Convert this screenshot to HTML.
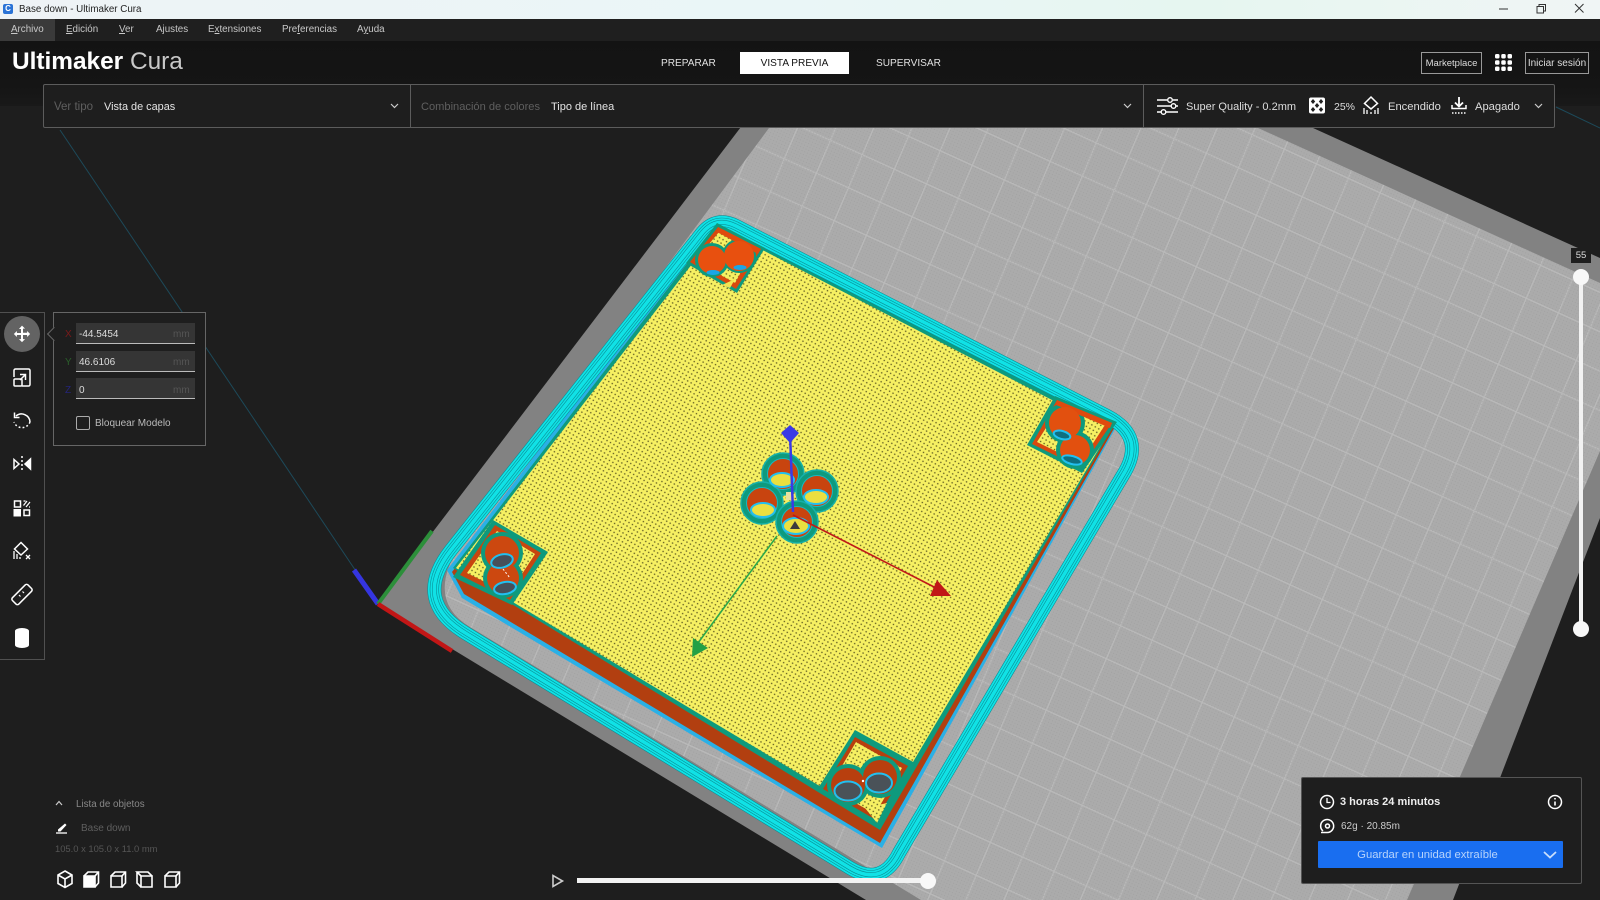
<!DOCTYPE html>
<html><head><meta charset="utf-8"><title>Base down - Ultimaker Cura</title>
<style>
html,body{margin:0;padding:0;width:1600px;height:900px;overflow:hidden;background:#1e1e1e;font-family:"Liberation Sans",sans-serif}
.a{position:absolute}
.t{position:absolute;white-space:nowrap;line-height:16px;height:16px}
svg{position:absolute;left:0;top:0}
u{text-decoration:underline}
</style></head><body>
<svg width="1600" height="900" viewBox="0 0 1600 900" style="z-index:0">
<defs>
<pattern id="grid" width="100" height="100" patternUnits="userSpaceOnUse" patternTransform="matrix(.32 .145 -.14 .33 10 4)">
<rect width="100" height="100" fill="#ababab"/>
<rect width="100" height="3.500" fill="#bababa"/><rect width="3.500" height="100" fill="#bababa"/>
</pattern>
<pattern id="fine" width="3" height="3" patternUnits="userSpaceOnUse" patternTransform="rotate(25)">
<rect x="1" y="1" width="1" height="1" fill="#9a9a9a" fill-opacity=".5"/>
</pattern>
<pattern id="yel" width="4" height="4" patternUnits="userSpaceOnUse" patternTransform="rotate(30)">
<rect width="4" height="4" fill="#f6f062"/><circle cx="2" cy="2" r=".8" fill="#5e5a20"/>
</pattern>
<path id="brim" d="M736 226L1107 416Q1147 437 1123 475L899 853Q882 887 850 868L467 634Q411 601 451 550L702 233Q716 216 736 226Z"/>
</defs>
<polygon points="887,-65 1600,258 1600,518 1453,900 866,900 378,604" fill="#828282"/>
<path d="M892 -38L1600 283L1600 451L1407 900L921 900L470 627Q425 600 460 545Z" fill="url(#grid)"/>
<path d="M892 -38L1600 283L1600 451L1407 900L921 900L470 627Q425 600 460 545Z" fill="url(#fine)"/>
<line x1="60" y1="130" x2="378" y2="604" stroke="#1d4a5a" stroke-width="1"/>
<line x1="1556" y1="107" x2="1600" y2="128" stroke="#1d4a5a" stroke-width="1"/>
<line x1="354" y1="570" x2="378" y2="604" stroke="#3535e0" stroke-width="5"/>
<line x1="378" y1="604" x2="432" y2="531" stroke="#2c8f3a" stroke-width="4"/>
<line x1="378" y1="604" x2="452" y2="651" stroke="#c21616" stroke-width="4.500"/>

<polygon points="717,218 1120,420 882,848 462,598 447,570" fill="#2ab0e6"/>
<polygon points="722,230 1117,423 880,843 464,594 452,572" fill="#b23f10"/>
<polygon points="719,222 1114,425 880,830 453,568" fill="#0e9a7d"/>
<polygon points="720,228 1110,430 878,821 456,568" fill="url(#yel)"/>

<g fill="none" stroke-linejoin="round">
<use href="#brim" stroke="#0a8f96" stroke-width="14"/>
<use href="#brim" stroke="#10e2e6" stroke-width="12.800"/>
<use href="#brim" stroke="#0a8f96" stroke-width="9.200"/>
<use href="#brim" stroke="#10e2e6" stroke-width="8"/>
<use href="#brim" stroke="#0a8f96" stroke-width="4.800"/>
<use href="#brim" stroke="#10e2e6" stroke-width="3.600"/>
</g>

<!-- top box -->
<polygon points="717,223 765,248 737,293 686,263" fill="#0e9a7d"/>
<polygon points="718,227 761,249 736,289 690,262" fill="#d8480e"/>
<polygon points="719,232 753,250 735,283 695,261" fill="url(#yel)"/>
<circle cx="712" cy="260" r="17" fill="#0e9a7d"/><circle cx="739" cy="256" r="17" fill="#0e9a7d"/>
<polygon points="718,227 761,249 758,254 717,232" fill="#e04a0e"/>
<circle cx="712" cy="260" r="14" fill="#e8500f"/><circle cx="739" cy="256" r="15" fill="#e8500f"/>
<ellipse cx="713" cy="272.500" rx="6.500" ry="2.500" fill="#1aa6e6"/><ellipse cx="740" cy="267.500" rx="6.500" ry="2.500" fill="#1aa6e6"/>
<polygon points="722,285 735,279 730,288" fill="#f2e552"/>

<!-- right box -->
<polygon points="1055,396 1117,422 1082,473 1027,445" fill="#0e9a7d"/>
<polygon points="1057,400 1112,423 1081,468 1032,444" fill="#d8480e"/>
<polygon points="1060,406 1105,425 1080,463 1037,442" fill="url(#yel)"/>
<circle cx="1065" cy="423" r="20" fill="#0e9a7d"/><circle cx="1075" cy="450" r="19" fill="#0e9a7d"/>
<polygon points="1057,400 1112,423 1110,428 1056,405" fill="#e04a0e"/>
<circle cx="1065" cy="423" r="16" fill="#e2500f"/><circle cx="1075" cy="450" r="15" fill="#e2500f"/>
<ellipse cx="1062" cy="435" rx="8.500" ry="4" fill="#0e6f80" stroke="#22c0f0" stroke-width="2" transform="rotate(15 1062 435)"/>
<ellipse cx="1072" cy="460" rx="10" ry="4" fill="#0e6f80" stroke="#22c0f0" stroke-width="2" transform="rotate(15 1072 460)"/>

<!-- left box -->
<polygon points="493,520 548,552 512,605 453,577" fill="#0e9a7d"/>
<polygon points="495,525 541,553 510,600 460,575" fill="#c7460f"/>
<polygon points="497,531 535,554 509,594 467,573" fill="url(#yel)"/>
<circle cx="502" cy="553" r="21" fill="#0e9a7d"/><circle cx="503" cy="578" r="20" fill="#0e9a7d"/>
<circle cx="502" cy="553" r="17" fill="#cc4810"/><circle cx="503" cy="578" r="16" fill="#cc4810"/>
<ellipse cx="502" cy="561" rx="11" ry="6.500" fill="#46505a" stroke="#22c0f0" stroke-width="2" transform="rotate(-15 502 561)"/>
<ellipse cx="505" cy="588" rx="11" ry="6" fill="#46505a" stroke="#22c0f0" stroke-width="2" transform="rotate(-10 505 588)"/>
<line x1="503" y1="569" x2="510" y2="578" stroke="#fff" stroke-width="1" stroke-dasharray="2 2"/>

<!-- bottom box -->
<polygon points="855,730 915,763 878,828 817,790" fill="#0e9a7d"/>
<polygon points="855,737 908,766 876,820 823,789" fill="#b83f0e"/>
<polygon points="856,742 902,768 875,814 829,788" fill="url(#yel)"/>
<circle cx="848" cy="785" r="21" fill="#0e9a7d"/><circle cx="880" cy="777" r="21" fill="#0e9a7d"/>
<polygon points="865,808 887,803 877,823" fill="url(#yel)"/>
<circle cx="848" cy="785" r="17" fill="#b83f0e"/><circle cx="880" cy="777" r="17" fill="#b83f0e"/>
<ellipse cx="848" cy="791" rx="13.500" ry="9.500" fill="#4a5258" stroke="#22c0f0" stroke-width="2"/>
<ellipse cx="879" cy="783" rx="13" ry="9.500" fill="#4a5258" stroke="#22c0f0" stroke-width="2"/>
<circle cx="863" cy="781" r="1.200" fill="#fff"/>

<!-- centre cluster -->
<g fill="#0e9a7d" stroke="#16b0a8" stroke-width="1.500">
<circle cx="783" cy="474" r="21"/><circle cx="817" cy="491" r="21"/><circle cx="762" cy="503" r="21"/><circle cx="797" cy="522" r="21"/>
</g>
<g fill="#c8440f" stroke="#18b8c0" stroke-width="1">
<circle cx="783" cy="474" r="15.500"/><circle cx="817" cy="491" r="15.500"/><circle cx="762" cy="503" r="15.500"/><circle cx="797" cy="522" r="15.500"/>
</g>
<g fill="#eadf40" stroke="#22c0f0" stroke-width="2">
<ellipse cx="782" cy="480" rx="12" ry="7"/><ellipse cx="816" cy="497" rx="12" ry="7"/><ellipse cx="763" cy="510" rx="12" ry="7"/><ellipse cx="796" cy="526" rx="13" ry="8"/>
</g>
<polygon points="795,521 800,529 790,529" fill="#3c3c3c"/>
<rect x="786" y="492" width="7" height="8" fill="#e8e0a0"/>

<!-- gizmo -->
<line x1="790" y1="433" x2="793" y2="512" stroke="#3a3ae6" stroke-width="2.500"/>
<polygon points="790,425 799,433 790,443 781,433" fill="#3a3ae6"/>
<line x1="793" y1="515" x2="938" y2="589" stroke="#c01818" stroke-width="1.600"/>
<polygon points="951,596 930,596 937,580" fill="#c01818"/>
<line x1="777" y1="536" x2="698" y2="643" stroke="#2aa84a" stroke-width="1.600"/>
<polygon points="692,657 693,638 708,648" fill="#23a045"/>
</svg>

<!-- chrome -->
<div class="a" style="left:0;top:0;width:1600px;height:19px;background:linear-gradient(90deg,#eef3f6,#eaf6f7 50%,#e6f6f0 75%,#f0f5f5);z-index:1"></div>
<div class="a" style="left:3px;top:4px;width:10px;height:10px;background:#2a73d6;border-radius:2px;z-index:2;color:#fff;font:bold 8px/10px 'Liberation Sans',sans-serif;text-align:center">C</div>
<div class="t" style="left:19px;top:2px;font-size:9.800px;color:#222;z-index:2">Base down - Ultimaker Cura</div>
<div class="a" style="left:0;top:19px;width:1600px;height:22px;background:#1f1f1f;z-index:1"></div>
<div class="a" style="left:0;top:19px;width:55px;height:22px;background:#3a3a3a;z-index:1"></div>
<div class="a" style="left:0;top:41px;width:1600px;height:65px;background:linear-gradient(#131313,#151515 70%,#191919);z-index:1"></div>

<div style="position:absolute;z-index:3;left:0;top:0;width:1600px;height:900px;color:#c8c8c8;font-size:9.800px">
<div class="t" style="left:11px;top:22px"><u>A</u>rchivo</div>
<div class="t" style="left:66px;top:22px"><u>E</u>dición</div>
<div class="t" style="left:119px;top:22px"><u>V</u>er</div>
<div class="t" style="left:156px;top:22px">A<u>j</u>ustes</div>
<div class="t" style="left:208px;top:22px">E<u>x</u>tensiones</div>
<div class="t" style="left:282px;top:22px">Pre<u>f</u>erencias</div>
<div class="t" style="left:357px;top:22px">A<u>y</u>uda</div>

<div class="a" style="left:12px;top:44px;font-size:24.400px;line-height:36px;font-weight:bold;color:#fff;white-space:nowrap">Ultimaker <span style="font-weight:normal;color:#c8c8c8">Cura</span></div>

<div class="t" style="left:661px;top:55.500px;font-size:10.100px;color:#e0e0e0">PREPARAR</div>
<div class="a" style="left:740px;top:52px;width:109px;height:22px;background:#fff;color:#111;font-size:10.100px;line-height:23px;text-align:center">VISTA PREVIA</div>
<div class="t" style="left:876px;top:55.500px;font-size:10.100px;color:#e0e0e0">SUPERVISAR</div>

<div class="a" style="left:1421px;top:52px;width:59px;height:20px;border:1px solid #999;color:#ddd;font-size:9.500px;line-height:21px;text-align:center">Marketplace</div>
<div class="a" style="left:1525px;top:52px;width:62px;height:20px;border:1px solid #999;color:#ddd;font-size:10px;line-height:21px;text-align:center">Iniciar sesión</div>

<!-- top bar -->
<div class="a" style="left:43px;top:84px;width:1510px;height:42px;background:#1e1e1e;border:1px solid #5c5c5c;border-radius:2px"></div>
<div class="a" style="left:410px;top:85px;width:1px;height:42px;background:#5c5c5c"></div>
<div class="a" style="left:1143px;top:85px;width:1px;height:42px;background:#5c5c5c"></div>
<div class="t" style="left:54px;top:98.500px;font-size:11.500px;color:#5f5f5f">Ver tipo</div>
<div class="t" style="left:104px;top:98.500px;font-size:10.900px;color:#e4e4e4">Vista de capas</div>
<div class="t" style="left:421px;top:98.500px;font-size:11.100px;color:#5f5f5f">Combinación de colores</div>
<div class="t" style="left:551px;top:98.500px;font-size:11px;color:#e4e4e4">Tipo de línea</div>
<div class="t" style="left:1186px;top:98.500px;font-size:11px;color:#ddd">Super Quality - 0.2mm</div>
<div class="t" style="left:1334px;top:98.500px;font-size:10.500px;color:#ddd">25%</div>
<div class="t" style="left:1388px;top:98.500px;font-size:11.200px;color:#ddd">Encendido</div>
<div class="t" style="left:1475px;top:98.500px;font-size:11.200px;color:#ddd">Apagado</div>

<!-- tool panel -->
<div class="a" style="left:-1px;top:312px;width:44px;height:346px;background:#1e1e1e;border:1px solid #505050"></div>
<div class="a" style="left:4px;top:316px;width:36px;height:36px;border-radius:50%;background:#636363"></div>
<div class="a" style="left:53px;top:312px;width:151px;height:132px;background:#1e1e1e;border:1px solid #666"></div>
<div class="a" style="left:49px;top:329px;width:9px;height:9px;background:#1e1e1e;border-left:1px solid #666;border-bottom:1px solid #666;transform:rotate(45deg)"></div>
<div class="a" style="left:76px;top:323px;width:119px;height:20px;background:#353535;border-bottom:1px solid #bbb"></div>
<div class="a" style="left:76px;top:351px;width:119px;height:20px;background:#353535;border-bottom:1px solid #bbb"></div>
<div class="a" style="left:76px;top:378px;width:119px;height:20px;background:#353535;border-bottom:1px solid #bbb"></div>
<div class="t" style="left:65px;top:327px;font-size:10px;color:#7a1a1a">X</div>
<div class="t" style="left:65px;top:354.500px;font-size:10px;color:#2a5f2a">Y</div>
<div class="t" style="left:65px;top:382.500px;font-size:10px;color:#25257a">Z</div>
<div class="t" style="left:79px;top:327px;font-size:10px;color:#ddd">-44.5454</div>
<div class="t" style="left:79px;top:354.500px;font-size:10px;color:#ddd">46.6106</div>
<div class="t" style="left:79px;top:382.500px;font-size:10px;color:#ddd">0</div>
<div class="t" style="left:173px;top:327px;font-size:10px;color:#555">mm</div>
<div class="t" style="left:173px;top:354.500px;font-size:10px;color:#555">mm</div>
<div class="t" style="left:173px;top:382.500px;font-size:10px;color:#555">mm</div>
<div class="a" style="left:76px;top:416px;width:12px;height:12px;border:1px solid #aaa;border-radius:2px"></div>
<div class="t" style="left:95px;top:416px;font-size:10px;color:#bbb">Bloquear Modelo</div>

<!-- object list -->
<div class="t" style="left:76px;top:797px;font-size:9.800px;color:#888">Lista de objetos</div>
<div class="t" style="left:81px;top:821px;font-size:10px;color:#5f5f5f">Base down</div>
<div class="t" style="left:55px;top:841px;font-size:9.400px;color:#555">105.0 x 105.0 x 11.0 mm</div>

<!-- print panel -->
<div class="a" style="left:1301px;top:777px;width:279px;height:105px;background:#1e1e1e;border:1px solid #555;border-radius:2px"></div>
<div class="t" style="left:1340px;top:794px;font-size:11px;font-weight:bold;color:#eee">3 horas 24 minutos</div>
<div class="t" style="left:1341px;top:819px;font-size:10px;color:#ccc">62g · 20.85m</div>
<div class="a" style="left:1318px;top:841px;width:245px;height:27px;background:#196ef0;border-radius:1px"></div>
<div class="a" style="left:1318px;top:842px;width:219px;height:27px;line-height:27px;text-align:center;font-size:11.300px;color:#b8d4fb">Guardar en unidad extraíble</div>

<!-- sliders -->
<div class="a" style="left:1571px;top:248px;width:20px;height:15px;background:#1e1e1e;color:#ddd;font-size:9.500px;line-height:16px;text-align:center">55</div>
<div class="a" style="left:1578.500px;top:277px;width:4.500px;height:352px;background:#f2f2f2"></div>
<div class="a" style="left:1573px;top:269px;width:16px;height:16px;border-radius:50%;background:#f8f8f8"></div>
<div class="a" style="left:1573px;top:621px;width:16px;height:16px;border-radius:50%;background:#f8f8f8"></div>
<div class="a" style="left:577px;top:878px;width:350px;height:5px;background:#f2f2f2"></div>
<div class="a" style="left:920px;top:873px;width:16px;height:16px;border-radius:50%;background:#f8f8f8"></div>
</div>

<!-- icons -->
<svg width="1600" height="900" viewBox="0 0 1600 900" style="z-index:4" fill="none" stroke="#fff" stroke-width="1.500">
<!-- window controls -->
<g stroke="#333" stroke-width="1"><path d="M1499 9h9"/><rect x="1537" y="6.500" width="6.500" height="6.500"/><path d="M1539 6.500V4.500h6.500v6.500h-2"/><path d="M1575 4l8.500 8.500M1583.500 4l-8.500 8.500"/></g>
<!-- chevrons -->
<g stroke="#ccc" stroke-width="1.200"><path d="M391 104l3.500 3.500 3.500-3.500"/><path d="M1124 104l3.500 3.500 3.500-3.500"/><path d="M1535 104l3.500 3.500 3.500-3.500"/></g>
<!-- grid icon -->
<g fill="#fff" stroke="none"><rect x="1495" y="54" width="4.500" height="4.500" rx="1.500"/><rect x="1501.250" y="54" width="4.500" height="4.500" rx="1.500"/><rect x="1507.500" y="54" width="4.500" height="4.500" rx="1.500"/><rect x="1495" y="60.250" width="4.500" height="4.500" rx="1.500"/><rect x="1501.250" y="60.250" width="4.500" height="4.500" rx="1.500"/><rect x="1507.500" y="60.250" width="4.500" height="4.500" rx="1.500"/><rect x="1495" y="66.500" width="4.500" height="4.500" rx="1.500"/><rect x="1501.250" y="66.500" width="4.500" height="4.500" rx="1.500"/><rect x="1507.500" y="66.500" width="4.500" height="4.500" rx="1.500"/></g>
<!-- settings icons -->
<g stroke-width="1.400"><path d="M1157 100h10M1173 100h5M1157 106h14M1176 106h2M1157 112h4M1166 112h12"/><circle cx="1170" cy="100" r="2.300"/><circle cx="1173.500" cy="106" r="2.300"/><circle cx="1163.500" cy="112" r="2.300"/></g>
<rect x="1309" y="97.500" width="16" height="16" rx="2" fill="#fff" stroke="none"/>
<g fill="#222" stroke="none"><path d="M1313 99l2.200 2.500-2.200 2.500-2.200-2.500zM1321 99l2.200 2.500-2.200 2.500-2.200-2.500zM1317 103l2.200 2.500-2.200 2.500-2.200-2.500zM1313 107l2.200 2.500-2.200 2.500-2.200-2.500zM1321 107l2.200 2.500-2.200 2.500-2.200-2.500z"/></g>
<path d="M1371 97l6.500 6.500-6.500 5.500-6.500-5.500z"/>
<path d="M1364 108v6M1367 110v4M1371 112v2M1375 110v4M1378 108v6" stroke-width="1.300"/>
<path d="M1459 97v9M1455 102.500l4 4 4-4" stroke-width="1.800"/>
<path d="M1452 105v3.500h14V105" stroke-width="1.500"/>
<path d="M1452 113h14" stroke-width="1.500" stroke-dasharray="1.500 1.500"/>
<!-- tools -->
<path transform="translate(22 334) scale(.76) translate(-22 -334)" d="M22 323l4 4h-2.700v5.300h5.400V330l4 4-4 4v-2.700h-5.400v5.400H26l-4 4-4-4h2.700v-5.400h-5.400V338l-4-4 4-4v2.700h5.400v-5.300H18z" fill="#fff" stroke="none"/>
<path d="M14 377v-6.500a1.500 1.500 0 0 1 1.500-1.500h13a1.500 1.500 0 0 1 1.500 1.500v14a1.500 1.500 0 0 1-1.500 1.500H22"/>
<rect x="14" y="379" width="8" height="7" rx="1"/>
<path d="M20 374.500h5.500v5.500M25.500 374.500L20 380"/>
<path d="M16 416a8.500 8.500 0 0 1 14 6"/>
<path d="M30 422a8.500 8.500 0 0 1-16 0" stroke-dasharray="1.800 2.200"/>
<path d="M14.500 412.500v5h5"/>
<path d="M22 456v16" stroke-dasharray="2 2"/>
<path d="M14 459.500v9l5-4.500z"/>
<path d="M30.500 459v10l-5.500-5z" fill="#fff"/>
<rect x="14.500" y="501" width="6" height="6"/>
<path d="M23.500 505.500l3.500-4.500M26 507l4-5M23.500 501h2M29 507h1" stroke-width="1.200"/>
<rect x="13.500" y="509" width="7.500" height="7.500" fill="#fff" stroke="none"/>
<rect x="24" y="510" width="5.500" height="5.500"/>
<path d="M21 542.500l6.500 6.500-6.500 6-6.500-6z"/>
<path d="M14 551v8M17 554v5M20 557v2" stroke-width="1.300"/>
<path d="M26 555l4 4M30 555l-4 4" stroke-width="1.300"/>
<rect x="11" y="590" width="22" height="9" rx="2" transform="rotate(-45 22 594.500)"/>
<path d="M19 595l1.500 1.500M22.500 591.500l1.500 1.500" stroke-width="1.200"/>
<path d="M15 631a7 3 0 0 1 14 0v14a7 3 0 0 1-14 0z" fill="#fff" stroke="none"/>
<!-- object list -->
<path d="M56 805l3-3.500 3 3.500" stroke="#ccc" stroke-width="1.200"/>
<path d="M56 833h11" stroke-width="1.300"/>
<path d="M58 829.500l7-6 1.500 1.500-6 6.500h-2.500z" fill="#fff" stroke="none"/>
<g stroke-width="1.600">
<path d="M65 871l7 4v8.500l-7 4-7-4V875zM58 875l7 4 7-4M65 879v8.500"/>
<path d="M84 876h11v11H84z" fill="#fff"/><path d="M84 876l4-4h10.500v11l-3.500 4M95 876l3.500-4"/>
<path d="M111 876h11v11h-11z"/><path d="M111 876l4-4h10.500v11l-3.500 4M122 876l3.500-4"/>
<path d="M141 876h11v11h-11z"/><path d="M141 876l-4-4h11l4 4M137 872v11l4 4"/>
<path d="M165 876h11v11h-11z"/><path d="M165 876l4-4h10.500v11l-3.500 4M176 876l3.500-4"/>
</g>
<!-- print panel -->
<circle cx="1327" cy="802" r="6.500"/><path d="M1327 798v4.500h3.500" stroke-width="1.300"/>
<circle cx="1555" cy="802" r="6.500"/><path d="M1555 801.500v4M1555 798v1.500" stroke-width="1.600"/>
<path d="M1323 831a6.500 6.500 0 1 1 4 1.500h-6" stroke-width="1.500"/><circle cx="1327.500" cy="826" r="2"/>
<path d="M1544 852l6 5.500 6-5.500" stroke="#c8defc" stroke-width="1.800"/>
<path d="M553 875.500v11l9.500-5.500z" stroke="#ccc" stroke-width="1.600"/>
</svg>
</body></html>
